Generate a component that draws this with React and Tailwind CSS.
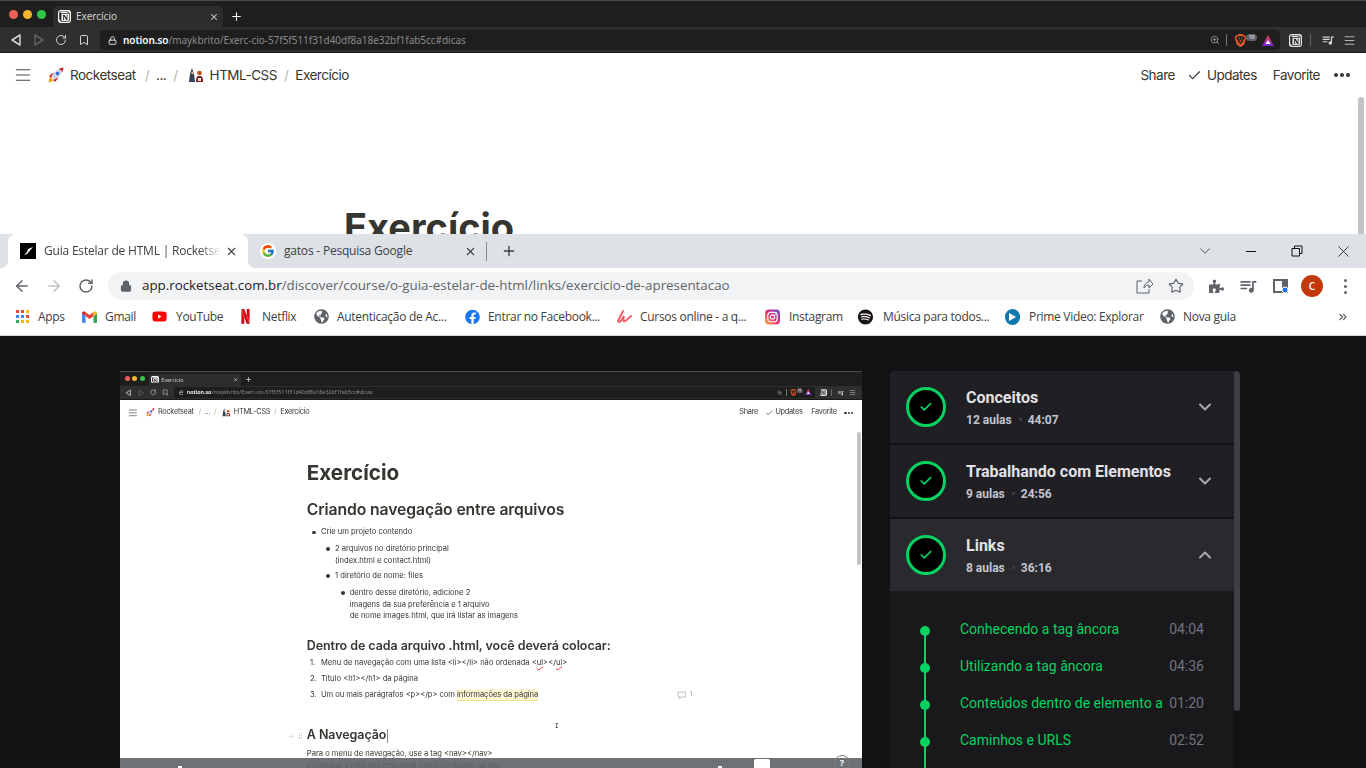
import React from "react";
import { ArrowLeft, ArrowRight, Bookmark, Check, ChevronDown, ChevronUp, ChevronsRight, Lock, Menu, Plus, RotateCw, Star, X, ZoomIn } from "lucide-react";
import { FaFacebook, FaGlobeAmericas, FaPuzzlePiece, FaSpotify, FaYoutube } from "react-icons/fa";
import { FcGoogle } from "react-icons/fc";
import { MdQueueMusic } from "react-icons/md";
import { SiBrave, SiNetflix, SiNotion } from "react-icons/si";

function RocketEmoji() {
  return (
    <svg width="16" height="16" viewBox="0 0 16 16" className="shrink-0">
      <path d="M0.500 15.500l1-5 2.500 1 1 2.500z" fill="#f59e0b" />
      <path d="M1 9l3.500-3 2 1-3.500 4zM7 15l3-3.500-1-2-4 3.500z" fill="#dc2626" />
      <path d="M3.500 9.500C5 5.500 9.500 1.500 15.500 0.500c-1 6-5 10.500-9 12z" fill="#cbd5e1" />
      <path d="M11 1.500l4.500-1-1 4.500z" fill="#dc2626" />
      <circle cx="9.500" cy="6.500" r="1.700" fill="#2563eb" />
    </svg>
  );
}

function PeopleEmoji() {
  return (
    <svg width="16" height="16" viewBox="0 0 16 16" className="shrink-0">
      <path d="M4 1l2 6 1 8H1l1-8z" fill="#334155" />
      <circle cx="4.500" cy="6" r="1.200" fill="#e2b48c" />
      <circle cx="11.500" cy="6" r="2.300" fill="#b45309" />
      <path d="M8 15c0-5 1-6 3.500-6s3.500 1 3.500 6z" fill="#7f1d1d" />
      <rect x="10" y="11" width="3" height="3" fill="#e5e7eb" />
    </svg>
  );
}

function MacTriangle({ back, dim }) {
  return (
    <svg width="12" height="14" viewBox="0 0 12 14" className={dim ? "opacity-30" : ""}>
      <path d={back ? "M10 2v10L2 7z" : "M2 2v10l8-5z"} fill="none" stroke="#d4d4d4" strokeWidth="1.500" strokeLinejoin="round" />
    </svg>
  );
}

function NotionBadge({ small }) {
  return (
    <span className={small ? "flex h-[13px] w-[13px] items-center justify-center rounded-[3px] bg-white" : "flex h-[13px] w-[13px] items-center justify-center rounded-[3px] bg-[#e5e5e5]"}>
      <SiNotion size={11} className="text-[#222]" />
    </span>
  );
}

function MacChrome() {
  return (
    <div className="bg-[#202020] text-white">
      <div className="flex h-[27px] items-end border-t border-[#4a4a4a] bg-[#1e1e1e]">
        <div className="flex h-[26px] w-[53px] items-center gap-[5px] pl-[9px]">
          <span className="h-[9px] w-[9px] rounded-full bg-[#ed5f57]" />
          <span className="h-[9px] w-[9px] rounded-full bg-[#f5b52f]" />
          <span className="h-[9px] w-[9px] rounded-full bg-[#33c748]" />
        </div>
        <div className="flex h-[21px] w-[170px] items-center rounded-t-[5px] bg-[#2d2d2d] pl-[5px] pr-[4px]">
          <NotionBadge small />
          <span className="ml-[5px] flex-1 text-[10px] text-[#cfcfcf]">Exercício</span>
          <X size={10} strokeWidth={2.5} className="text-[#d4d4d4]" />
        </div>
        <div className="flex h-[21px] w-[26px] items-center justify-center">
          <Plus size={13} strokeWidth={2} className="text-white" />
        </div>
      </div>
      <div className="flex h-[26px] items-center border-b border-[#1a1a1a] bg-[#2f2f2f] pl-[10px] pt-[1px]">
        <div className="flex w-[23px] justify-start"><MacTriangle back /></div>
        <div className="flex w-[22px] justify-start"><MacTriangle dim /></div>
        <div className="flex w-[23px] justify-start"><RotateCw size={12} strokeWidth={2} className="text-[#d4d4d4]" /></div>
        <div className="flex w-[22px] justify-start"><Bookmark size={12} strokeWidth={2} className="text-[#d4d4d4]" /></div>
        <div className="flex h-[20px] w-[1180px] items-center rounded-[4px] bg-[#1e1e1e] pl-[8px]">
          <Lock size={9} strokeWidth={2.5} className="text-[#e5e5e5]" />
          <span className="ml-[6px] flex-1 whitespace-nowrap text-[10px] tracking-[-0.04px] text-[#8a8a8a]">
            <span className="font-semibold text-white">notion.so</span>/maykbrito/Exerc-cio-57f5f511f31d40df8a18e32bf1fab5cc#dicas
          </span>
          <ZoomIn size={10} className="text-[#9a9a9a]" />
          <span className="ml-[6px] h-[12px] w-px bg-[#777]" />
          <SiBrave size={13} className="ml-[7px] text-[#e8562a]" />
          <span className="-ml-[1px] -mt-[5px] h-[7px] w-[11px] rounded-full bg-[#60606a] text-center text-[5px] leading-[7px] text-white">10</span>
          <svg width="12" height="11" viewBox="0 0 12 11" className="ml-[5px] mr-[6px]">
            <defs>
              <linearGradient id="tri" x1="0" y1="0" x2="0" y2="1">
                <stop offset="0" stopColor="#ef4444" />
                <stop offset="1" stopColor="#6d28d9" />
              </linearGradient>
            </defs>
            <path d="M6 0l6 11H0z" fill="url(#tri)" />
            <path d="M6 5l2.500 4h-5z" fill="#fff" />
          </svg>
        </div>
        <div className="ml-[9px]"><NotionBadge /></div>
        <span className="ml-[8px] h-[12px] w-px bg-[#666]" />
        <MdQueueMusic size={14} className="ml-[10px] text-[#d4d4d4]" />
        <Menu size={13} className="ml-[8px] text-[#b5b5b5]" />
      </div>
    </div>
  );
}

function NotionNav({ pad }) {
  return (
    <div className={`flex h-[44px] items-center pl-[15px] pr-[16px] text-[13.500px] tracking-[-0.5px] text-[#37352f] [font-family:Inter,sans-serif] ${pad}`}>
      <Menu size={18} strokeWidth={1.6} className="-ml-[1px] scale-x-110 text-[#4a4a48]" />
      <span className="ml-[16px]"><RocketEmoji /></span>
      <span className="ml-[6px]">Rocketseat</span>
      <span className="ml-[9px] text-[#b5b4b0]">/</span>
      <span className="ml-[7px]">...</span>
      <span className="ml-[7px] text-[#b5b4b0]">/</span>
      <span className="ml-[10px]"><PeopleEmoji /></span>
      <span className="ml-[6px]">HTML-CSS</span>
      <span className="ml-[7px] text-[#b5b4b0]">/</span>
      <span className="ml-[7px]">Exercício</span>
      <div className="ml-auto flex items-center">
        <span>Share</span>
        <Check size={15} strokeWidth={1.8} className="ml-[12px]" />
        <span className="ml-[5px]">Updates</span>
        <span className="ml-[16px]">Favorite</span>
        <span className="ml-[14px] flex gap-[2px]">
          <span className="h-[4px] w-[4px] rounded-full bg-[#37352f]" />
          <span className="h-[4px] w-[4px] rounded-full bg-[#37352f]" />
          <span className="h-[4px] w-[4px] rounded-full bg-[#37352f]" />
        </span>
      </div>
    </div>
  );
}

function Bullet({ text, indent, top }) {
  return (
    <div className={`flex text-[14px] leading-[22px] text-[#37352f] ${indent} ${top}`}>
      <span className="w-[16px] shrink-0 pt-[8px]"><span className="block h-[7px] w-[7px] rounded-full bg-[#37352f]" /></span>
      <span className="whitespace-pre-line">{text}</span>
    </div>
  );
}

function NotionDoc({ top }) {
  return (
    <div className={`relative pl-[344px] [font-family:Inter,sans-serif] text-[#37352f] ${top}`}>
      <div className="h-[48px] text-[38px] font-bold leading-[48px]">Exercício</div>
      <div className="mt-[26px] h-[36px] text-[29px] font-semibold leading-[36px] tracking-[-0.2px]">Criando navegação entre arquivos</div>
      <div className="mt-[12px]">
        <Bullet indent="ml-[10px]" top="" text="Crie um projeto contendo" />
        <Bullet indent="ml-[36px]" top="mt-[8px]" text={"2 arquivos no diretório principal\n(index.html e contact.html)"} />
        <Bullet indent="ml-[36px]" top="mt-[6px]" text="1 diretório de nome: files" />
        <Bullet indent="ml-[63px]" top="mt-[9px]" text={"dentro desse diretório, adicione 2\nimagens da sua preferência e 1 arquivo\nde nome images.html, que irá listar as imagens"} />
      </div>
      <div className="mt-[26px] h-[32px] text-[23px] font-semibold leading-[32px] tracking-[-0.1px]">Dentro de cada arquivo .html, você deverá colocar:</div>
      <div className="mt-[5px] flex h-[24px] items-center text-[14px]">
        <span className="w-[26px] pl-[6px]">1.</span>Menu de navegação com uma lista &lt;li&gt;&lt;/li&gt; não ordenada &lt;<span className="underline decoration-red-500 decoration-wavy">ul</span>&gt;&lt;/<span className="underline decoration-red-500 decoration-wavy">ul</span>&gt;
      </div>
      <div className="mt-[5px] flex h-[24px] items-center text-[14px]">
        <span className="w-[26px] pl-[6px]">2.</span>Título &lt;h1&gt;&lt;/h1&gt; da página
      </div>
      <div className="mt-[6px] flex h-[24px] w-[710px] items-center text-[14px] tracking-[-0.08px]">
        <span className="w-[26px] pl-[6px]">3.</span>Um ou mais parágrafos &lt;p&gt;&lt;/p&gt; com&nbsp;
        <span className="border-b-[3px] border-[#f5e27a] bg-[#fdf7d6]">informações da página</span>
        <span className="ml-auto flex items-center gap-[6px] text-[12px] text-[#9a9a97]">
          <svg width="18" height="16" viewBox="0 0 18 16"><path d="M2 2h14v9H8l-3 3v-3H2z" fill="none" stroke="#a5a5a2" strokeWidth="1.300" /></svg>
          1
        </span>
      </div>
      <div className="relative mt-[47px] flex h-[32px] items-center text-[23px] font-semibold tracking-[-0.1px]">
        <span className="absolute -left-[37px] flex items-center gap-[6px] text-[#c9c9c6]">
          <Plus size={16} strokeWidth={1.5} />
          <span className="grid grid-cols-2 gap-[2px]">
            {[0, 1, 2, 3, 4, 5].map((i) => <span key={i} className="h-[2px] w-[2px] bg-[#c9c9c6]" />)}
          </span>
        </span>
        A Navegação<span className="ml-[1px] h-[26px] w-px bg-[#8a8a87]" />
      </div>
      <div className="mt-[6px] text-[14px] leading-[22px]">
        Para o menu de navegação, use a tag &lt;nav&gt;&lt;/nav&gt;<br />
        e coloque a lista não ordenada como conteúdo da tag
      </div>
      <span className="absolute left-[800px] top-[552px] text-[14px] leading-none text-[#333] [font-family:'Liberation_Mono',monospace]">I</span>
    </div>
  );
}

function MacWindow({ top, thumb, navPad }) {
  return (
    <div className="relative w-[1366px] bg-white">
      <MacChrome />
      <NotionNav pad={navPad} />
      <NotionDoc top={top} />
      <span className={`absolute right-[2px] w-[6px] rounded-full bg-[#c3c3c3] ${thumb}`} />
    </div>
  );
}

function WindowsTab({ active, icon, title, fade }) {
  return (
    <div className={active ? "relative z-10 flex h-[34px] w-[240px] items-center rounded-t-[8px] bg-white pl-[12px] pr-[10px]" : "relative flex h-[34px] w-[239px] items-center pl-[12px] pr-[10px]"}>
      {active && <span className="absolute -left-[8px] bottom-0 h-[8px] w-[8px] bg-[radial-gradient(circle_at_0_0,transparent_8px,white_8.500px)]" />}
      {active && <span className="absolute -right-[8px] bottom-0 h-[8px] w-[8px] bg-[radial-gradient(circle_at_100%_0,transparent_8px,white_8.500px)]" />}
      {icon}
      <span className={`ml-[8px] w-[175px] flex-1 overflow-hidden whitespace-nowrap text-[12px] tracking-[-0.2px] text-[#3c4043] ${fade}`}>{title}</span>
      <X size={13} strokeWidth={2} className="ml-[4px] shrink-0 text-[#3c4043]" />
    </div>
  );
}

function RocketFavicon() {
  return (
    <span className="flex h-[16px] w-[16px] shrink-0 items-center justify-center bg-black">
      <svg width="12" height="12" viewBox="0 0 12 12">
        <path d="M2 10l3-1 6-7-5 2-1 3z" fill="#fff" />
      </svg>
    </span>
  );
}

function AppsGrid() {
  const colors = ["bg-[#ea4335]", "bg-[#ea4335]", "bg-[#fbbc05]", "bg-[#4285f4]", "bg-[#4285f4]", "bg-[#ea4335]", "bg-[#34a853]", "bg-[#fbbc05]", "bg-[#fbbc05]"];
  return (
    <span className="grid h-[13px] w-[13px] grid-cols-3 gap-[2px]">
      {colors.map((c, i) => <span key={i} className={`h-[3px] w-[3px] ${c}`} />)}
    </span>
  );
}

function GmailIcon() {
  return (
    <svg width="15" height="12" viewBox="0 0 15 12">
      <path d="M0 2.500V11a1 1 0 0 0 1 1h2.500V5z" fill="#4285f4" />
      <path d="M15 2.500V11a1 1 0 0 1-1 1h-2.500V5z" fill="#34a853" />
      <path d="M3.500 5V1l4 3 4-3v4l-4 3z" fill="#ea4335" />
      <path d="M0 2.500C0 .5 2 0 3.500 1v4z" fill="#c5221f" />
      <path d="M15 2.500C15 .5 13 0 11.500 1v4z" fill="#fbbc05" />
    </svg>
  );
}

function RocketU() {
  return (
    <svg width="15" height="14" viewBox="0 0 15 14">
      <path d="M6 1C4 5 2 9 1 11c2 3 4-2 6-5-1 3-1 6 1 5 2-1 4-3 6-5" fill="none" stroke="#f0616d" strokeWidth="2" strokeLinecap="round" />
    </svg>
  );
}

function InstaIcon() {
  return (
    <svg width="16" height="16" viewBox="0 0 16 16">
      <defs>
        <linearGradient id="ig" x1="0" y1="1" x2="1" y2="0">
          <stop offset="0" stopColor="#fdb33c" />
          <stop offset="0.5" stopColor="#e0307c" />
          <stop offset="1" stopColor="#5b50d6" />
        </linearGradient>
      </defs>
      <rect width="16" height="16" rx="4" fill="url(#ig)" />
      <rect x="3" y="3" width="10" height="10" rx="3" fill="none" stroke="#fff" strokeWidth="1.200" />
      <circle cx="8" cy="8" r="2.300" fill="none" stroke="#fff" strokeWidth="1.200" />
      <circle cx="11" cy="5" r=".7" fill="#fff" />
    </svg>
  );
}

function PrimeIcon() {
  return (
    <span className="flex h-[16px] w-[16px] items-center justify-center rounded-full bg-[#0f79af]">
      <svg width="7" height="8" viewBox="0 0 7 8"><path d="M0 0l7 4-7 4z" fill="#fff" /></svg>
    </span>
  );
}

const bookmarks = [
  { icon: <AppsGrid />, label: "Apps", w: "w-[27px]", gap: "ml-[8px]", next: "ml-[17px]" },
  { icon: <GmailIcon />, label: "Gmail", w: "w-[30px]", gap: "ml-[8px]", next: "ml-[17px]" },
  { icon: <FaYoutube size={17} className="text-[#f00]" />, label: "YouTube", w: "w-[46px]", gap: "ml-[9px]", next: "ml-[16px]" },
  { icon: <SiNetflix size={15} className="text-[#d20b14]" />, label: "Netflix", w: "w-[35px]", gap: "ml-[9px]", next: "ml-[17px]" },
  { icon: <FaGlobeAmericas size={15} className="text-[#5f6368]" />, label: "Autenticação de Ac...", w: "w-[111px]", gap: "ml-[8px]", next: "ml-[17px]" },
  { icon: <FaFacebook size={16} className="text-[#1877f2]" />, label: "Entrar no Facebook...", w: "w-[112px]", gap: "ml-[8px]", next: "ml-[17px]" },
  { icon: <RocketU />, label: "Cursos online - a q...", w: "w-[108px]", gap: "ml-[8px]", next: "ml-[17px]" },
  { icon: <InstaIcon />, label: "Instagram", w: "w-[53px]", gap: "ml-[9px]", next: "ml-[16px]" },
  { icon: <FaSpotify size={16} className="text-[#191414]" />, label: "Música para todos...", w: "w-[105px]", gap: "ml-[10px]", next: "ml-[17px]" },
  { icon: <PrimeIcon />, label: "Prime Video: Explorar", w: "w-[113px]", gap: "ml-[9px]", next: "ml-[18px]" },
  { icon: <FaGlobeAmericas size={15} className="text-[#5f6368]" />, label: "Nova guia", w: "w-[54px]", gap: "ml-[8px]", next: "ml-0" },
];

function ChromeWindow() {
  return (
    <div className="relative [font-family:'Open_Sans',sans-serif]">
      <div className="flex h-[34px] items-center bg-[#dee1e6] pl-[8px]">
        <WindowsTab active icon={<RocketFavicon />} title="Guia Estelar de HTML | Rocketseat" fade="[mask-image:linear-gradient(to_right,black_88%,transparent)]" />
        <WindowsTab icon={<span className="flex h-[16px] w-[16px] items-center justify-center rounded-full bg-white"><FcGoogle size={14} /></span>} title="gatos - Pesquisa Google" fade="" />
        <span className="-ml-px h-[19px] w-px bg-[#888b90]" />
        <Plus size={16} strokeWidth={2} className="ml-[14px] text-[#3c4043]" />
        <div className="ml-auto flex items-center">
          <ChevronDown size={18} strokeWidth={1} className="text-[#222]" />
          <div className="ml-[32px] h-px w-[10px] bg-[#111]" />
          <svg width="12" height="12" viewBox="0 0 12 12" className="ml-[35px]"><path d="M1 3.500h7.500V11H1zM3.500 3.500V1H11v7.500H8.500" fill="none" stroke="#111" /></svg>
          <X size={19} strokeWidth={1} className="ml-[31px] mr-[13px] text-[#111]" />
        </div>
      </div>
      <div className="flex h-[36px] items-center bg-white pl-[13px]">
        <ArrowLeft size={18} strokeWidth={2} className="text-[#5f6368]" />
        <ArrowRight size={18} strokeWidth={2} className="ml-[14px] text-[#bdc1c6]" />
        <RotateCw size={16} strokeWidth={2.2} className="ml-[15px] text-[#5f6368]" />
        <div className="ml-[14px] flex h-[28px] w-[1086px] items-center rounded-full bg-[#f1f3f4] pl-[12px] pr-[10px]">
          <Lock size={12} strokeWidth={2.5} className="fill-[#5f6368] text-[#5f6368]" />
          <span className="ml-[10px] flex-1 whitespace-nowrap text-[13.330px] text-[#5f6368]">
            <span className="text-[#202124]">app.rocketseat.com.br</span>/discover/course/o-guia-estelar-de-html/links/exercicio-de-apresentacao
          </span>
          <svg width="17" height="16" viewBox="0 0 17 16" className="mr-[15px]">
            <path d="M6 3H1v12h12v-4M8 10c0-4 3-6 5-6V1l4 5-4 4V7c-2 0-4 1-5 3z" fill="none" stroke="#5f6368" strokeWidth="1" />
          </svg>
          <Star size={16} strokeWidth={1.7} className="text-[#5f6368]" />
        </div>
        <FaPuzzlePiece size={15} className="ml-[15px] text-[#5f6368]" />
        <MdQueueMusic size={20} className="ml-[14px] text-[#5f6368]" />
        <svg width="16" height="16" viewBox="0 0 16 16" className="ml-[15px]">
          <rect x="1" y="2" width="13" height="12" fill="none" stroke="#5f6368" strokeWidth="2" />
          <rect x="9" y="2" width="5" height="12" fill="#5f6368" />
          <circle cx="12" cy="12" r="3" fill="#1a73e8" stroke="#fff" />
        </svg>
        <span className="ml-[12px] flex h-[22px] w-[22px] items-center justify-center rounded-full bg-[#c23a0b] text-[10px] font-semibold text-white">C</span>
        <span className="ml-[21px] flex flex-col gap-[3px]">
          <span className="h-[3px] w-[3px] rounded-full bg-[#5f6368]" />
          <span className="h-[3px] w-[3px] rounded-full bg-[#5f6368]" />
          <span className="h-[3px] w-[3px] rounded-full bg-[#5f6368]" />
        </span>
      </div>
      <div className="flex h-[32px] items-center border-b border-[#d5d7da] bg-white pb-[6px] pl-[15px] text-[12px] text-[#3c4043]">
        {bookmarks.map((b) => (
          <React.Fragment key={b.label}>
            <span className="flex w-[15px] shrink-0 items-center justify-center">{b.icon}</span>
            <span className={`${b.gap} ${b.w} whitespace-nowrap tracking-[-0.3px]`}>{b.label}</span>
            <span className={b.next} />
          </React.Fragment>
        ))}
        <ChevronsRight size={12} strokeWidth={2.5} className="ml-auto mr-[17px] text-[#5f6368]" />
      </div>
    </div>
  );
}

function ModuleRow({ title, lessons, time, open }) {
  return (
    <div className={open ? "flex h-[72px] items-center bg-[#29292e] pl-[16px] pr-[19px]" : "flex h-[72px] items-center bg-[#202024] pl-[16px] pr-[19px]"}>
      <span className="flex h-[40px] w-[40px] shrink-0 items-center justify-center rounded-full border-[3px] border-[#04d361] bg-black">
        <Check size={14} strokeWidth={3} className="text-[#04d361]" />
      </span>
      <div className="ml-[20px] flex-1 pt-[1px]">
        <div className="h-[22px] text-[16px] font-bold leading-[22px] text-[#e1e1e6]">{title}</div>
        <div className="mt-[2px] flex items-center text-[12px] font-bold leading-[18px] text-[#c4c4cc]">
          {lessons}
          <span className="ml-[7px] mr-[6px] h-[3px] w-[3px] bg-[#3a3a40]" />
          {time}
        </div>
      </div>
      {open
        ? <ChevronUp size={20} strokeWidth={2.5} className="text-[#a8a8b3]" />
        : <ChevronDown size={20} strokeWidth={2.5} className="text-[#a8a8b3]" />}
    </div>
  );
}

function Lesson({ title, time }) {
  return (
    <div className="relative flex h-[37px] items-center pl-[70px] pr-[30px] text-[14px]">
      <span className="absolute left-[30px] h-[10px] w-[10px] rounded-full bg-[#04d361]" />
      <span className="mb-[2px] flex-1 whitespace-nowrap text-[#04d361]">{title}</span>
      <span className="mb-[2px] text-[#737380]">{time}</span>
    </div>
  );
}

function Sidebar() {
  return (
    <div className="relative h-[500px] w-[350px] shrink-0 overflow-hidden rounded-t-[4px] pr-[6px] [font-family:Roboto,sans-serif]">
      <div className="flex flex-col gap-[2px]">
        <ModuleRow title="Conceitos" lessons="12 aulas" time="44:07" />
        <ModuleRow title="Trabalhando com Elementos" lessons="9 aulas" time="24:56" />
        <ModuleRow open title="Links" lessons="8 aulas" time="36:16" />
      </div>
      <div className="relative h-[300px] bg-[#19191b] pt-[21px]">
        <span className="absolute bottom-0 left-[34px] top-[38px] w-[2px] bg-[#04d361]" />
        <Lesson title="Conhecendo a tag âncora" time="04:04" />
        <Lesson title="Utilizando a tag âncora" time="04:36" />
        <Lesson title="Conteúdos dentro de elemento a" time="01:20" />
        <Lesson title="Caminhos e URLS" time="02:52" />
      </div>
      <span className="absolute right-0 top-0 h-[340px] w-[6px] rounded-[3px] bg-[#3e3e44]" />
    </div>
  );
}

function VideoFrame() {
  return (
    <div className="relative h-[397px] w-[742px] shrink-0 overflow-hidden">
      <div className="[zoom:0.543] blur-[0.3px]">
        <MacWindow top="pt-[67px]" thumb="top-[112px] h-[245px]" navPad="pt-[4px]" />
      </div>
      <div className="absolute inset-x-0 bottom-0 h-[10px] bg-[#5d6368]/90">
        <span className="absolute left-[58px] top-[8px] h-[2px] w-[4px] bg-white" />
        <span className="absolute left-[598px] top-[8px] h-[2px] w-[4px] bg-white" />
        <span className="absolute left-[634px] top-[1px] h-[9px] w-[16px] rounded-t-[2px] bg-white" />
        <span className="absolute left-[714px] top-[-3px] h-[16px] w-[16px] rounded-full border border-[#7a7f84] text-center text-[9px] font-bold leading-[13px] text-white">?</span>
      </div>
    </div>
  );
}

export default function App() {
  return (
    <div className="flex h-[768px] w-[1366px] flex-col overflow-hidden bg-[#121214]">
      <div className="h-[234px] shrink-0 overflow-hidden">
        <MacWindow top="pt-[106px]" thumb="top-[97px] h-[260px]" navPad="" />
      </div>
      <ChromeWindow />
      <div className="flex flex-1 gap-[28px] pl-[120px] pt-[35px]">
        <VideoFrame />
        <Sidebar />
      </div>
    </div>
  );
}
